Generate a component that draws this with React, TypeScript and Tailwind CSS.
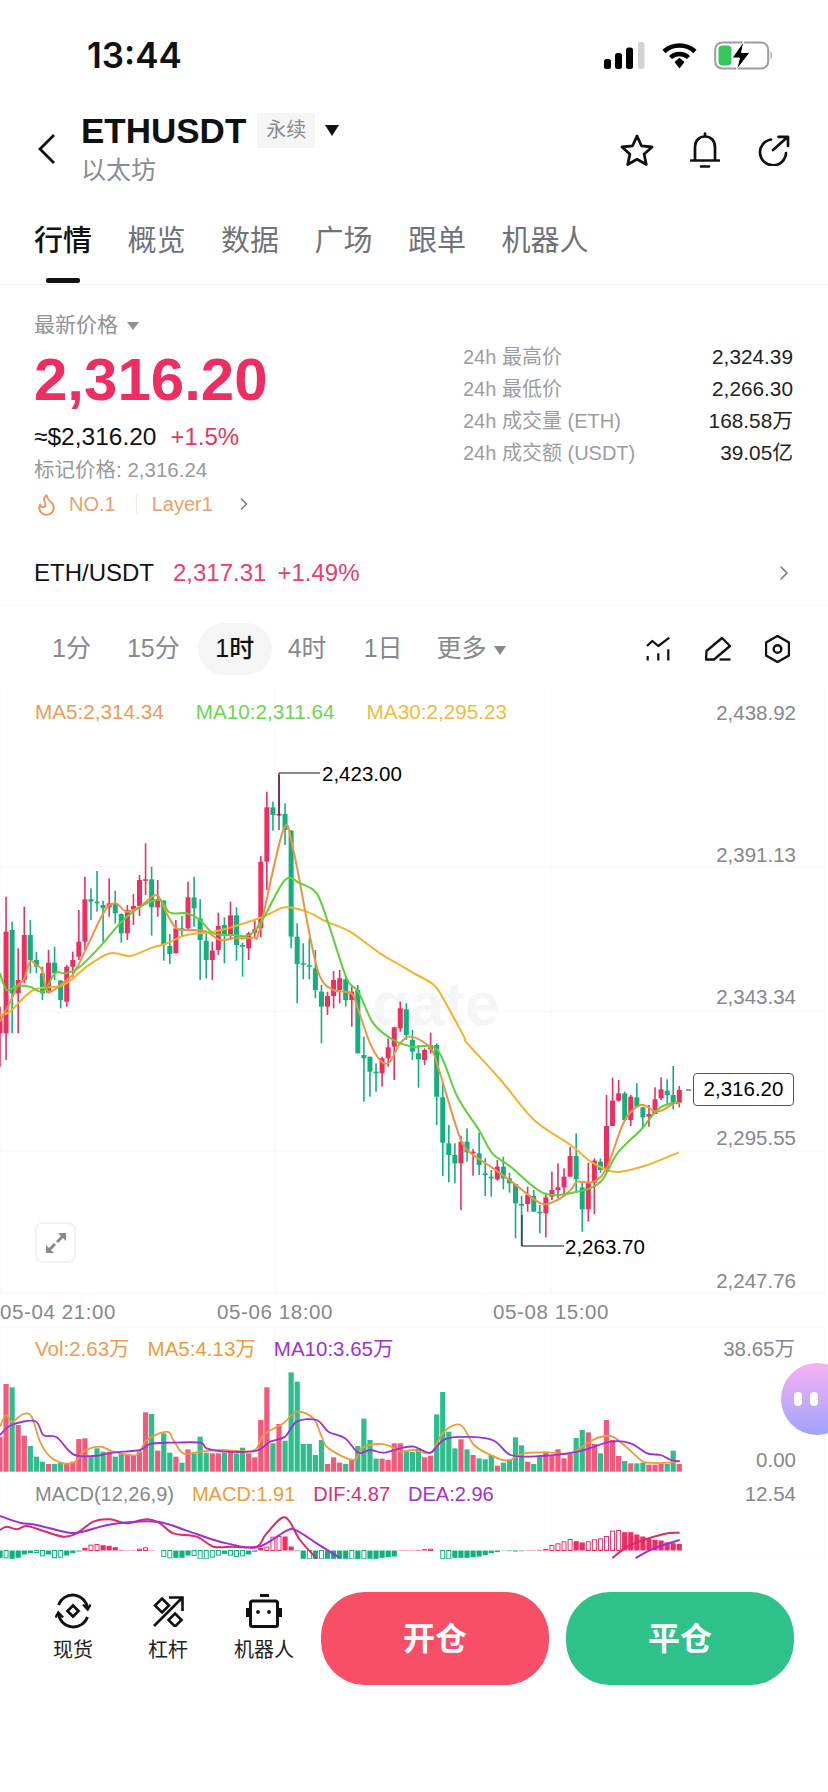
import { ChevronRight, Flame } from "lucide-react";

type Candle = [string, number, number, number, number];
type Pt = [number, number];

const CANDLE_STEP = 6.065;
const UP = "#ee2e5f";
const DOWN = "#13b07e";

// color, wick top, body top, body bottom, wick bottom (measured on 3x crops)
const candlesLeft: Candle[] = [
  ["r", 950, 990, 1030, 1130], ["r", 620, 725, 1030, 1110], ["g", 695, 720, 910, 1030], ["r", 775, 870, 910, 1030],
  ["r", 650, 735, 870, 880], ["g", 690, 735, 810, 850], ["g", 785, 810, 830, 850], ["g", 830, 850, 910, 930],
  ["r", 780, 818, 908, 910], ["g", 770, 818, 850, 870], ["g", 870, 872, 930, 955], ["r", 825, 830, 935, 950],
  ["r", 785, 810, 830, 860], ["r", 660, 755, 800, 810], ["r", 560, 628, 755, 780], ["g", 595, 628, 635, 690],
  ["g", 543, 635, 640, 665], ["g", 632, 645, 655, 755], ["r", 565, 640, 652, 680], ["g", 602, 640, 670, 700],
  ["g", 670, 672, 730, 758], ["r", 645, 660, 730, 750], ["r", 612, 648, 658, 705], ["r", 555, 570, 648, 678],
  ["r", 460, 568, 570, 615], ["g", 530, 568, 652, 737], ["r", 570, 628, 652, 680], ["g", 630, 632, 765, 812],
  ["g", 732, 768, 792, 822], ["r", 690, 715, 790, 790], ["g", 678, 715, 722, 738], ["r", 575, 622, 715, 722],
  ["g", 560, 622, 655, 710], ["g", 628, 685, 750, 870], ["g", 730, 752, 810, 865], ["r", 755, 782, 810, 870],
  ["r", 668, 708, 780, 795], ["g", 682, 705, 735, 820], ["r", 635, 676, 738, 750], ["g", 652, 676, 765, 812],
  ["g", 758, 765, 770, 860], ["r", 725, 730, 775, 810], ["r", 688, 718, 728, 745], ["r", 498, 515, 715, 742],
  ["r", 305, 352, 515, 600], ["g", 335, 352, 375, 422], ["r", 255, 372, 375, 375], ["g", 340, 372, 420, 465],
  ["g", 420, 422, 740, 775], ["g", 700, 740, 822, 940], ["g", 760, 820, 824, 868], ["g", 745, 826, 830, 868],
  ["g", 780, 835, 900, 925], ["g", 885, 905, 950, 1060], ["r", 905, 918, 950, 975], ["r", 843, 870, 918, 955],
  ["r", 840, 865, 900, 940], ["g", 860, 868, 930, 950], ["r", 885, 905, 930, 1010], ["g", 885, 900, 1090, 1090],
  ["g", 1040, 1095, 1105, 1235], ["g", 1100, 1100, 1145, 1220], ["g", 1120, 1145, 1150, 1205], ["r", 1100, 1105, 1150, 1190],
  ["r", 1045, 1072, 1105, 1130], ["r", 1010, 1012, 1070, 1170], ["r", 935, 955, 1015, 1025], ["g", 940, 958, 1035, 1050],
  ["g", 1020, 1050, 1085, 1110],
];

const candlesRight: Candle[] = [
  ["g", 165, 190, 208, 293], ["r", 175, 180, 210, 225], ["r", 128, 165, 178, 190], ["g", 160, 165, 320, 405],
  ["g", 282, 322, 458, 558], ["g", 405, 460, 495, 577], ["g", 460, 495, 520, 580], ["r", 437, 455, 520, 660],
  ["g", 415, 455, 487, 515], ["r", 477, 485, 490, 557], ["g", 428, 490, 525, 555], ["g", 505, 550, 555, 618],
  ["g", 540, 560, 565, 620], ["r", 510, 530, 568, 572], ["g", 500, 530, 565, 598], ["g", 548, 565, 580, 608],
  ["g", 582, 582, 640, 745], ["g", 617, 642, 647, 768], ["r", 590, 615, 642, 665], ["g", 600, 618, 665, 665],
  ["g", 645, 665, 670, 730], ["r", 608, 622, 670, 742], ["r", 545, 600, 620, 630], ["r", 520, 592, 600, 625],
  ["r", 535, 560, 592, 620], ["r", 470, 498, 560, 560], ["g", 430, 498, 568, 605], ["g", 575, 592, 658, 725],
  ["r", 518, 578, 658, 695], ["r", 505, 512, 578, 672], ["g", 505, 515, 540, 548], ["r", 315, 408, 545, 545],
  ["r", 263, 332, 408, 408], ["r", 270, 310, 332, 335], ["g", 305, 310, 390, 395], ["r", 315, 320, 390, 408],
  ["g", 280, 322, 350, 352], ["g", 350, 352, 382, 415], ["r", 345, 372, 380, 410], ["r", 292, 328, 372, 372],
  ["r", 262, 298, 325, 330], ["g", 268, 302, 315, 340], ["g", 228, 315, 338, 358], ["r", 288, 300, 338, 352],
];

const zA = (p: Pt[]): Pt[] => p.map(([x, y]) => [x / 3, 690 + y / 3]);
const zB = (p: Pt[]): Pt[] => p.map(([x, y]) => [414 + x / 3, 990 + y / 3]);
const zVol = (p: Pt[]): Pt[] => p.map(([x, y]) => [x / 3, 1320 + y / 3]);
const zVolR = (p: Pt[]): Pt[] => p.map(([x, y]) => [414 + x / 3, 1320 + y / 3]);

const ma5 = [
  ...zA([[0, 995], [36, 925], [54, 885], [72, 868], [90, 815], [108, 825], [126, 840], [145, 905], [200, 870], [230, 835], [310, 670], [345, 640], [380, 665], [420, 650], [470, 615], [500, 670], [530, 715], [580, 720], [620, 725], [660, 750], [700, 745], [760, 742], [780, 715], [850, 420], [880, 480], [930, 740], [960, 860], [1000, 900], [1054, 910], [1075, 960], [1110, 1060], [1145, 1115], [1170, 1115], [1200, 1060], [1236, 1040]]),
  ...zB([[50, 175], [75, 240], [130, 420], [160, 480], [230, 530], [300, 580], [380, 640], [430, 630], [470, 600], [490, 575], [540, 575], [580, 530], [630, 395], [680, 345], [730, 365], [780, 340], [797, 340]]),
];
const ma10 = [
  ...zA([[0, 850], [20, 900], [50, 888], [90, 890], [130, 905], [165, 850], [200, 850], [240, 830], [300, 770], [360, 700], [400, 665], [440, 640], [480, 630], [510, 668], [560, 670], [600, 690], [640, 730], [700, 735], [750, 735], [790, 685], [855, 570], [900, 580], [950, 610], [985, 700], [1040, 865], [1075, 905], [1120, 1000], [1180, 1050], [1236, 1070]]),
  ...zB([[70, 180], [130, 320], [195, 420], [235, 490], [290, 530], [390, 610], [490, 605], [560, 575], [610, 490], [680, 420], [730, 360], [770, 340], [797, 340]]),
];
const ma30 = [
  ...zA([[0, 975], [30, 965], [100, 900], [190, 885], [260, 830], [330, 790], [390, 798], [450, 775], [500, 760], [560, 735], [640, 725], [700, 710], [790, 680], [855, 652], [920, 665], [980, 695], [1050, 725], [1140, 790], [1200, 825], [1242, 850], [1302, 885], [1332, 930], [1392, 1040]]),
  ...zB([[160, 160], [260, 270], [360, 390], [470, 465], [530, 515], [580, 540], [620, 545], [700, 525], [795, 487]]),
];

// top of each volume bar on the 3x crop, baseline at 455
const volTops: [string, number][] = [
  ["r", 350], ["r", 192], ["g", 202], ["r", 315], ["r", 347], ["g", 378], ["g", 410], ["g", 425], ["r", 432], ["g", 432],
  ["g", 428], ["r", 430], ["r", 425], ["r", 357], ["r", 355], ["g", 410], ["g", 385], ["g", 395], ["r", 395], ["g", 410],
  ["g", 400], ["r", 405], ["r", 408], ["r", 395], ["r", 277], ["g", 282], ["r", 392], ["g", 340], ["g", 398], ["r", 410],
  ["g", 428], ["r", 388], ["g", 400], ["g", 350], ["g", 398], ["r", 400], ["r", 400], ["g", 398], ["r", 390], ["g", 400],
  ["g", 383], ["r", 400], ["r", 412], ["r", 300], ["r", 202], ["g", 370], ["r", 312], ["g", 362], ["g", 157], ["g", 185],
  ["g", 372], ["g", 372], ["g", 405], ["g", 360], ["r", 432], ["r", 412], ["r", 428], ["g", 432], ["r", 420], ["g", 378],
  ["g", 296], ["g", 360], ["g", 416], ["r", 416], ["r", 420], ["r", 370], ["r", 370], ["g", 392], ["g", 396], ["g", 385],
  ["r", 412], ["r", 407], ["g", 283], ["g", 216], ["g", 335], ["g", 385], ["r", 358], ["g", 388], ["r", 405], ["g", 415],
  ["g", 418], ["g", 405], ["r", 437], ["g", 428], ["g", 418], ["g", 352], ["g", 376], ["r", 425], ["g", 432], ["g", 410],
  ["r", 395], ["r", 408], ["r", 388], ["r", 415], ["r", 402], ["g", 354], ["g", 330], ["r", 337], ["r", 372], ["g", 400],
  ["r", 300], ["r", 360], ["r", 408], ["g", 423], ["r", 430], ["g", 430], ["g", 428], ["r", 434], ["r", 434], ["r", 432],
  ["g", 432], ["g", 392], ["r", 432],
];

const volOrange = [
  ...zVol([[0, 320], [18, 285], [36, 305], [70, 282], [95, 290], [120, 365], [150, 410], [190, 430], [225, 425], [250, 395], [300, 380], [340, 395], [410, 405], [440, 360], [500, 335], [520, 360], [550, 400], [600, 395], [660, 390], [760, 392], [790, 345], [850, 310], [890, 275], [940, 295], [965, 350], [985, 385], [1060, 420], [1085, 385], [1130, 372], [1170, 378], [1200, 395], [1242, 390]]),
  ...zVolR([[50, 398], [90, 335], [140, 315], [180, 375], [230, 405], [280, 422], [330, 400], [400, 397], [470, 400], [540, 358], [590, 348], [630, 375], [680, 420], [700, 428], [770, 428], [797, 422]]),
];
const volPurple = [
  ...zVol([[0, 345], [35, 315], [105, 303], [130, 345], [170, 352], [220, 403], [280, 408], [340, 398], [420, 390], [450, 372], [510, 368], [600, 368], [620, 385], [680, 395], [770, 392], [810, 365], [855, 350], [890, 305], [950, 300], [985, 335], [1035, 355], [1075, 398], [1110, 390], [1150, 398], [1200, 385], [1242, 380]]),
  ...zVolR([[50, 398], [100, 355], [230, 358], [290, 405], [380, 408], [490, 395], [590, 365], [650, 370], [700, 400], [740, 405], [770, 420], [797, 424]]),
];

// macd histogram: value on crop px (+ red, - green), hollow flag
const macd: [number, number][] = [
  [-22, 0], [-22, 1], [-25, 0], [-22, 0], [-12, 0], [-8, 0], [-6, 1], [-16, 1], [-12, 0], [-22, 1], [-20, 1], [-15, 0], [-8, 0], [-3, 0],
  [8, 0], [16, 1], [18, 1], [16, 0], [14, 0], [10, 0], [2, 0], [1, 0], [1, 0], [4, 1], [8, 1], [1, 0], [0, 0],
  [-18, 1], [-22, 1], [-22, 0], [-22, 0], [-15, 0], [-15, 1], [-25, 1], [-25, 1], [-20, 1], [-14, 1], [-10, 0], [-14, 1], [-18, 1], [-16, 1], [-12, 0], [-4, 0],
  [8, 0], [10, 1], [40, 1], [42, 1], [42, 0], [12, 0], [-2, 0], [-25, 0], [-25, 1], [-25, 0], [-25, 1], [-25, 0], [-25, 0], [-25, 0], [-25, 0], [-25, 1], [-25, 0], [-25, 1], [-25, 0], [-25, 0], [-22, 0], [-20, 0], [-18, 0],
  [1, 0], [1, 0], [1, 0], [2, 0], [4, 0], [4, 1], [0, 0], [-25, 1], [-25, 1], [-22, 0], [-22, 0], [-22, 0], [-20, 0], [-18, 0], [-14, 0], [-8, 0], [-5, 0], [-1, 0], [-2, 0], [-3, 0], [-2, 0], [1, 0], [1, 0], [2, 0], [5, 0],
  [15, 1], [20, 1], [26, 1], [33, 1], [28, 0], [24, 0], [26, 1], [32, 1], [35, 1], [42, 1], [58, 1], [60, 1], [55, 0], [55, 0], [48, 0], [42, 0], [35, 0], [32, 0], [30, 0], [24, 0], [22, 0], [20, 0],
];

const dif = zVol([[0, 630], [20, 620], [50, 628], [80, 618], [130, 633], [190, 650], [230, 640], [280, 605], [330, 598], [380, 610], [440, 598], [480, 610], [520, 640], [590, 650], [640, 680], [700, 680], [770, 680], [800, 640], [855, 592], [900, 660], [950, 716]]);
const dea = zVol([[0, 588], [60, 608], [110, 615], [200, 637], [240, 637], [340, 612], [470, 605], [560, 632], [660, 665], [770, 682], [860, 632], [890, 632], [950, 670], [1020, 714]]);
const difR = zVolR([[595, 714], [650, 675], [750, 642], [797, 638]]);
const deaR = zVolR([[665, 714], [720, 685], [797, 660]]);

function smooth(p: Pt[]) {
  let d = `M${p[0][0]} ${p[0][1]}`;
  for (let i = 0; i < p.length - 1; i++) {
    const a = p[Math.max(i - 1, 0)];
    const b = p[i];
    const c = p[i + 1];
    const e = p[Math.min(i + 2, p.length - 1)];
    d += ` C${b[0] + (c[0] - a[0]) / 6} ${b[1] + (c[1] - a[1]) / 6} ${c[0] - (e[0] - b[0]) / 6} ${c[1] - (e[1] - b[1]) / 6} ${c[0]} ${c[1]}`;
  }
  return d;
}

function Candles({ data, start, base }: { data: Candle[]; start: number; base: number }) {
  return (
    <>
      {data.map((c, i) => {
        const x = (start + i) * CANDLE_STEP;
        const color = c[0] === "r" ? UP : DOWN;
        const y = (v: number) => base + v / 3;
        return (
          <g key={i} fill={color}>
            <rect x={x - 0.8} y={y(c[1])} width={1.6} height={(c[4] - c[1]) / 3} />
            <rect x={x - 2.5} y={y(c[2])} width={5} height={Math.max((c[3] - c[2]) / 3, 1.5)} />
          </g>
        );
      })}
    </>
  );
}

function ChartDrawing() {
  const gridX = [1, 275, 551, 825];
  const gridY = [867, 1011.5, 1151, 1293];
  const gridColor = "#f7f8f9";
  return (
    <svg viewBox="0 690 828 870" className="absolute inset-0 h-[870px] w-[828px]">
      <defs>
        <clipPath id="macdClip">
          <rect x="0" y="1500" width="828" height="59" />
        </clipPath>
      </defs>
      {gridX.map((x) => (
        <g key={x} stroke={gridColor} strokeWidth="1.2">
          <line x1={x} x2={x} y1={690} y2={1293} />
          <line x1={x} x2={x} y1={1328} y2={1558} />
        </g>
      ))}
      {gridY.map((y) => (
        <line key={y} x1={0} x2={825} y1={y} y2={y} stroke={gridColor} strokeWidth="1.2" />
      ))}
      <line x1={0} x2={825} y1={1327} y2={1327} stroke={gridColor} strokeWidth="1.2" />
      <line x1={0} x2={825} y1={1558} y2={1558} stroke="#fafbfb" strokeWidth="1.2" />
      <Candles data={candlesLeft} start={0} base={690} />
      <Candles data={candlesRight} start={69} base={990} />
      <path d={smooth(ma30)} fill="none" stroke="#f3b32e" strokeWidth="2" />
      <path d={smooth(ma5)} fill="none" stroke="#ef9342" strokeWidth="2" />
      <path d={smooth(ma10)} fill="none" stroke="#5fd03a" strokeWidth="2" />
      <polyline points="279,830 279,773 320,773" fill="none" stroke="#111" strokeWidth="1" />
      <polyline points="522,1215 522,1246 564,1246" fill="none" stroke="#111" strokeWidth="1" />
      <line x1={686} x2={691} y1={1090} y2={1090} stroke="#333" strokeWidth="1" />

      {volTops.map(([c, top], i) => (
        <rect
          key={i}
          x={i * CANDLE_STEP - 2.6}
          y={1320 + top / 3}
          width={5.2}
          height={(455 - top) / 3}
          fill={c === "r" ? "#f4587c" : "#2fbd8b"}
        />
      ))}
      <path d={smooth(volOrange)} fill="none" stroke="#ee9a35" strokeWidth="1.8" />
      <path d={smooth(volPurple)} fill="none" stroke="#9d30d8" strokeWidth="1.8" />

      <g clipPath="url(#macdClip)">
        {macd.map(([v, hollow], i) => {
          if (v === 0) return null;
          const color = v > 0 ? "#f02d63" : "#13b07e";
          const h = Math.abs(v) / 3;
          const y = v > 0 ? 1550.5 - h : 1550.5;
          return hollow ? (
            <rect key={i} x={i * CANDLE_STEP - 2} y={y} width={4} height={h} fill="#fff" stroke={color} strokeWidth="1" />
          ) : (
            <rect key={i} x={i * CANDLE_STEP - 2.6} y={y} width={5.2} height={h} fill={color} />
          );
        })}
        <path d={smooth(dif)} fill="none" stroke="#d92a6a" strokeWidth="2" />
        <path d={smooth(dea)} fill="none" stroke="#a32cd8" strokeWidth="2" />
        <path d={smooth(difR)} fill="none" stroke="#d92a6a" strokeWidth="2" />
        <path d={smooth(deaR)} fill="none" stroke="#a32cd8" strokeWidth="2" />
      </g>
    </svg>
  );
}

function StatusIcons() {
  return (
    <div className="flex items-center">
      <svg width="41" height="27" viewBox="0 0 41 27">
        <rect x="0" y="17" width="7" height="10" rx="2.5" fill="#000" />
        <rect x="11" y="11" width="7" height="16" rx="2.5" fill="#000" />
        <rect x="22" y="5.5" width="7" height="21.5" rx="2.5" fill="#000" />
        <rect x="34" y="0" width="6.5" height="27" rx="2.5" fill="#d2d2d2" />
      </svg>
      <svg className="ml-[17px]" width="35" height="27" viewBox="0 0 35 27">
        <path d="M2 9.5C10.5 1.5 24.5 1.5 33 9.5" fill="none" stroke="#000" strokeWidth="4.6" />
        <path d="M8.5 15.5C13.5 10.8 21.5 10.8 26.5 15.5" fill="none" stroke="#000" strokeWidth="4.4" />
        <path d="M12.5 20L17.5 15.8L22.5 20L17.5 26.5Z" fill="#000" />
      </svg>
      <svg className="ml-[17px]" width="60" height="29" viewBox="0 0 60 29">
        <rect x="1.2" y="1.5" width="53" height="26" rx="7" fill="#fff" stroke="#9d9d9d" strokeWidth="2" />
        <rect x="4.5" y="4.5" width="13" height="20" rx="4" fill="#35c759" />
        <path d="M56.5 10.5C58.5 11.5 58.5 17.5 56.5 18.5Z" fill="#a8a8a8" />
        <path d="M30 0L18 17H25.5L22.5 29L36 11.5H27.5Z" fill="#000" stroke="#fff" strokeWidth="1" />
      </svg>
    </div>
  );
}

function HeaderIcons() {
  return (
    <div className="flex items-center">
      <svg width="36" height="34" viewBox="0 0 36 34">
        <path d="M18 3L22.4 12.8L33 14L25.1 21.2L27.3 31.5L18 26.3L8.7 31.5L10.9 21.2L3 14L13.6 12.8Z" fill="none" stroke="#111" strokeWidth="2.8" strokeLinejoin="round" />
      </svg>
      <svg className="ml-[35px]" width="30" height="37" viewBox="0 0 30 37">
        <path d="M15 1.5V4.5M5 28V15C5 8.5 9.5 4.5 15 4.5C20.5 4.5 25 8.5 25 15V28M1 28.5H29M11 34.5H19" fill="none" stroke="#111" strokeWidth="2.7" strokeLinecap="round" />
      </svg>
      <svg className="ml-[37px]" width="33" height="31" viewBox="0 0 33 31">
        <path d="M14 4.5A13 13 0 1 0 29 18" fill="none" stroke="#111" strokeWidth="2.7" strokeLinecap="round" />
        <path d="M16 15L30 2.5M21.5 1.8H31V11" fill="none" stroke="#111" strokeWidth="2.7" strokeLinecap="round" strokeLinejoin="round" />
      </svg>
    </div>
  );
}

function ToolIcons() {
  return (
    <div className="flex items-center">
      <svg width="25" height="25" viewBox="0 0 25 25" fill="none" stroke="#111" strokeWidth="2.2">
        <path d="M1 9L6.3 4L12.3 9L23.3 0.7" strokeLinejoin="round" />
        <path d="M1.7 19V23.5M12.3 16.3V23.5M22.3 12.3V23.5" />
      </svg>
      <svg className="ml-[34px]" width="26" height="25" viewBox="0 0 26 25" fill="none" stroke="#111" strokeWidth="2.3">
        <path d="M1 22.5L1.5 14L17 1L25 9L9 22.5Z" strokeLinejoin="round" />
        <path d="M14.5 22.5H25.5" />
      </svg>
      <svg className="ml-[34px]" width="25" height="28" viewBox="0 0 25 28" fill="none" stroke="#111" strokeWidth="2.4">
        <path d="M12.5 1L24 7.5V20.5L12.5 27L1 20.5V7.5Z" strokeLinejoin="round" />
        <circle cx="12.5" cy="14" r="3.8" />
      </svg>
    </div>
  );
}

function BottomAction({ label, children, className }: { label: string; children: React.ReactNode; className: string }) {
  return (
    <div className={`flex w-[64px] flex-col items-center ${className}`}>
      <div className="flex h-[38px] items-center">{children}</div>
      <span className="mt-[6px] text-[20px] leading-[28px] text-[#222]">{label}</span>
    </div>
  );
}

export default function App() {
  const tabs = ["概览", "数据", "广场", "跟单", "机器人"];
  const stats = [
    ["24h 最高价", "2,324.39"],
    ["24h 最低价", "2,266.30"],
    ["24h 成交量 (ETH)", "168.58万"],
    ["24h 成交额 (USDT)", "39.05亿"],
  ];

  return (
    <div className="relative h-[1792px] w-[828px] overflow-hidden bg-white text-[#111] [font-family:'Liberation_Sans','Noto_Sans_CJK_SC',sans-serif]">
      {/* status bar */}
      <div className="flex h-[110px] items-center justify-between pl-[87px] pr-[54px]">
        <span className="text-[35px] font-semibold leading-none [font-family:Inter,sans-serif]">13:44</span>
        <StatusIcons />
      </div>

      {/* title */}
      <div className="flex h-[80px] items-center pl-[37px] pr-[38px]">
        <svg width="20" height="32" viewBox="0 0 20 32" className="mt-[-2px]">
          <path d="M17 2L3 16L17 30" fill="none" stroke="#111" strokeWidth="2.8" />
        </svg>
        <div className="ml-[24px] flex-1">
          <div className="flex h-[40px] items-center">
            <span className="text-[35px] font-bold leading-none">ETHUSDT</span>
            <span className="ml-[11px] flex h-[35px] w-[58px] items-center justify-center bg-[#f5f5f5] text-[20px] text-[#8b8b8b]">永续</span>
            <span className="ml-[10px] h-0 w-0 border-x-[7.5px] border-t-[11px] border-x-transparent border-t-[#111]" />
          </div>
          <div className="h-[40px] text-[25px] leading-[40px] text-[#8a8d91]">以太坊</div>
        </div>
        <HeaderIcons />
      </div>

      {/* tabs */}
      <div className="flex h-[95px] gap-[35.5px] border-b border-[#f0f0f0] pl-[34px] pt-[33px]">
        <div className="flex flex-col items-center">
          <span className="text-[29px] font-medium leading-[36px]">行情</span>
          <span className="mt-[19px] h-[5px] w-[34px] rounded-[2px] bg-[#111]" />
        </div>
        {tabs.map((t) => (
          <span key={t} className="text-[29px] leading-[36px] text-[#6f7378]">{t}</span>
        ))}
      </div>

      {/* price block */}
      <div className="flex h-[255px] justify-between pl-[34px] pr-[35px]">
        <div className="pt-[26px]">
          <div className="flex h-[28px] items-center text-[21px] text-[#8f9296]">
            最新价格
            <span className="ml-[9px] mt-[2px] h-0 w-0 border-x-[6px] border-t-[8px] border-x-transparent border-t-[#8f9296]" />
          </div>
          <div className="mt-[11px] h-[60px] text-[60px] font-bold leading-[60px] text-[#ee2e62]">2,316.20</div>
          <div className="mt-[11px] flex h-[32px] items-center text-[24px]">
            <span className="text-[24.5px]">≈$2,316.20</span>
            <span className="ml-[14px] text-[#e8355f]">+1.5%</span>
          </div>
          <div className="mt-[3px] h-[28px] text-[20.5px] leading-[28px] text-[#989a9d]">标记价格: 2,316.24</div>
          <div className="mt-[6px] flex h-[28px] items-center text-[20px] text-[#ef9f6b]">
            <Flame size={25} strokeWidth={1.8} className="text-[#f0935a]" />
            <span className="ml-[10px]">NO.1</span>
            <span className="ml-[20px] h-[20px] w-px bg-[#f3e7df]" />
            <span className="ml-[15px]">Layer1</span>
            <ChevronRight size={20} strokeWidth={1.8} className="ml-[21px] text-[#777]" />
          </div>
        </div>
        <div className="w-[330px] pt-[56px]">
          {stats.map(([k, v]) => (
            <div key={k} className="flex h-[32px] items-center justify-between">
              <span className="text-[20px] text-[#9b9da0]">{k}</span>
              <span className="text-[20.8px] text-[#222]">{v}</span>
            </div>
          ))}
        </div>
      </div>

      {/* spot row */}
      <div className="flex h-[66px] items-center border-b border-[#fafafa] pl-[34px] pr-[32px] text-[24px]">
        <span className="font-medium">ETH/USDT</span>
        <span className="ml-[19px] text-[#e8406e]">2,317.31</span>
        <span className="ml-[11px] text-[#e8406e]">+1.49%</span>
        <ChevronRight size={24} strokeWidth={1.5} className="ml-auto text-[#777]" />
      </div>

      {/* timeframes */}
      <div className="flex h-[84px] items-center pl-[52px] pr-[38px] pt-[2px] text-[25px] text-[#85888c]">
        <span>1分</span>
        <span className="ml-[36px]">15分</span>
        <span className="ml-[18px] flex h-[52px] w-[74px] items-center justify-center rounded-[26px] bg-[#f5f5f5] font-medium text-[#111]">1时</span>
        <span className="ml-[16px]">4时</span>
        <span className="ml-[37px]">1日</span>
        <span className="ml-[34px]">更多</span>
        <span className="ml-[7px] mt-[3px] h-0 w-0 border-x-[6px] border-t-[9px] border-x-transparent border-t-[#85888c]" />
        <div className="ml-auto">
          <ToolIcons />
        </div>
      </div>

      {/* chart */}
      <div className="relative h-[870px]">
        <div className="absolute left-[372px] top-[284px] text-[62px] font-bold leading-[60px] text-[#f4f5f7]">gate</div>
        <ChartDrawing />
        <div className="relative flex h-[44px] items-center gap-[32px] pl-[35px] text-[20.7px]">
          <span className="text-[#ef9b52]">MA5:2,314.34</span>
          <span className="text-[#6cd651]">MA10:2,311.64</span>
          <span className="text-[#f2bb3d]">MA30:2,295.23</span>
        </div>

        <div className="absolute right-[32px] top-[9px] text-[20.5px] leading-[28px] text-[#85888c]">2,438.92</div>
        <div className="absolute right-[32px] top-[151px] text-[20.5px] leading-[28px] text-[#85888c]">2,391.13</div>
        <div className="absolute right-[32px] top-[293px] text-[20.5px] leading-[28px] text-[#85888c]">2,343.34</div>
        <div className="absolute right-[32px] top-[434px] text-[20.5px] leading-[28px] text-[#85888c]">2,295.55</div>
        <div className="absolute right-[32px] top-[577px] text-[20.5px] leading-[28px] text-[#85888c]">2,247.76</div>

        <div className="absolute left-[322px] top-[70px] text-[20.5px] leading-[28px] text-black">2,423.00</div>
        <div className="absolute left-[565px] top-[543px] text-[20.5px] leading-[28px] text-black">2,263.70</div>
        <div className="absolute left-[693px] top-[383px] flex h-[33px] w-[101px] items-center justify-center rounded-[4px] border border-[#555] bg-white text-[20.5px] text-black">2,316.20</div>

        <button className="absolute left-[35px] top-[532px] flex h-[41px] w-[41px] items-center justify-center rounded-[8px] border-2 border-[#f2f2f2] bg-white">
          <svg width="22" height="22" viewBox="0 0 22 22" fill="#85888c">
            <path d="M13 1H21V9L18 6L13 11L11 9L16 4Z" />
            <path d="M9 21H1V13L4 16L9 11L11 13L6 18Z" />
          </svg>
        </button>

        <div className="absolute left-0 top-[608px] text-[20.5px] leading-[28px] tracking-[0.6px] text-[#85888c]">05-04 21:00</div>
        <div className="absolute left-[217px] top-[608px] text-[20.5px] leading-[28px] tracking-[0.6px] text-[#85888c]">05-06 18:00</div>
        <div className="absolute left-[493px] top-[608px] text-[20.5px] leading-[28px] tracking-[0.6px] text-[#85888c]">05-08 15:00</div>

        <div className="absolute left-[35px] top-[645px] flex h-[28px] items-center gap-[18px] text-[20.5px]">
          <span className="text-[#ef9b52]">Vol:2.63万</span>
          <span className="text-[#ef9b3a]">MA5:4.13万</span>
          <span className="text-[#a032d2]">MA10:3.65万</span>
        </div>
        <div className="absolute right-[33px] top-[645px] text-[20.5px] leading-[28px] text-[#85888c]">38.65万</div>
        <div className="absolute right-[32px] top-[756px] text-[20.5px] leading-[28px] text-[#85888c]">0.00</div>

        <div className="absolute left-[35px] top-[790px] flex h-[28px] items-center gap-[18px] text-[20px]">
          <span className="text-[#85888c]">MACD(12,26,9)</span>
          <span className="text-[#ef9b3a]">MACD:1.91</span>
          <span className="text-[#d4307a]">DIF:4.87</span>
          <span className="text-[#a032d2]">DEA:2.96</span>
        </div>
        <div className="absolute right-[32px] top-[790px] text-[20.5px] leading-[28px] text-[#85888c]">12.54</div>

        {/* floating assistant */}
        <div className="absolute left-[781px] top-[673px] flex h-[72px] w-[72px] items-center gap-[8px] rounded-full bg-gradient-to-b from-[#f6b2f2] to-[#a0a2fb] pl-[13px]">
          <span className="h-[14px] w-[8px] rounded-full bg-white" />
          <span className="h-[14px] w-[8px] rounded-full bg-white" />
        </div>
      </div>

      {/* bottom actions */}
      <div className="flex pl-[41px] pt-[32px]">
        <BottomAction label="现货" className="">
          <svg width="36" height="36" viewBox="0 0 36 36" fill="none" stroke="#111" strokeWidth="2.8">
            <path d="M3.5 12A15 15 0 0 1 32.5 15" />
            <path d="M28 11.5L32.7 16.5L35.5 11.5" strokeWidth="2.4" />
            <path d="M32.5 24A15 15 0 0 1 3.5 21" />
            <path d="M8 24.5L3.3 19.5L0.5 24.5" strokeWidth="2.4" />
            <path d="M18 12.5L23.5 18L18 23.5L12.5 18Z" />
          </svg>
        </BottomAction>
        <BottomAction label="杠杆" className="ml-[31px]">
          <svg width="31" height="31" viewBox="0 0 31 31" fill="none" stroke="#111" strokeWidth="2.6">
            <path d="M1 30L29.5 1.5M16 1.5H29.5V15" />
            <path d="M9 2.5L16 9.5L9 16.5L2 9.5ZM22 17.5L28.5 24L22 30.5L15.5 24Z" />
          </svg>
        </BottomAction>
        <BottomAction label="机器人" className="ml-[32px]">
          <svg width="36" height="34" viewBox="0 0 36 34" fill="none" stroke="#111" strokeWidth="3">
            <path d="M14 1.5H23" />
            <rect x="4.5" y="7" width="27" height="25.5" rx="2" />
            <path d="M1.5 14V23M34.5 14V23" />
            <circle cx="12" cy="18" r="1.9" fill="#111" stroke="none" />
            <circle cx="23" cy="18" r="1.9" fill="#111" stroke="none" />
          </svg>
        </BottomAction>
        <button className="ml-[25px] h-[93px] w-[228px] rounded-[44px] bg-[#f84f67] text-[32px] font-bold text-white">开仓</button>
        <button className="ml-[17px] h-[93px] w-[228px] rounded-[44px] bg-[#2ec189] text-[32px] font-bold text-white">平仓</button>
      </div>
    </div>
  );
}
